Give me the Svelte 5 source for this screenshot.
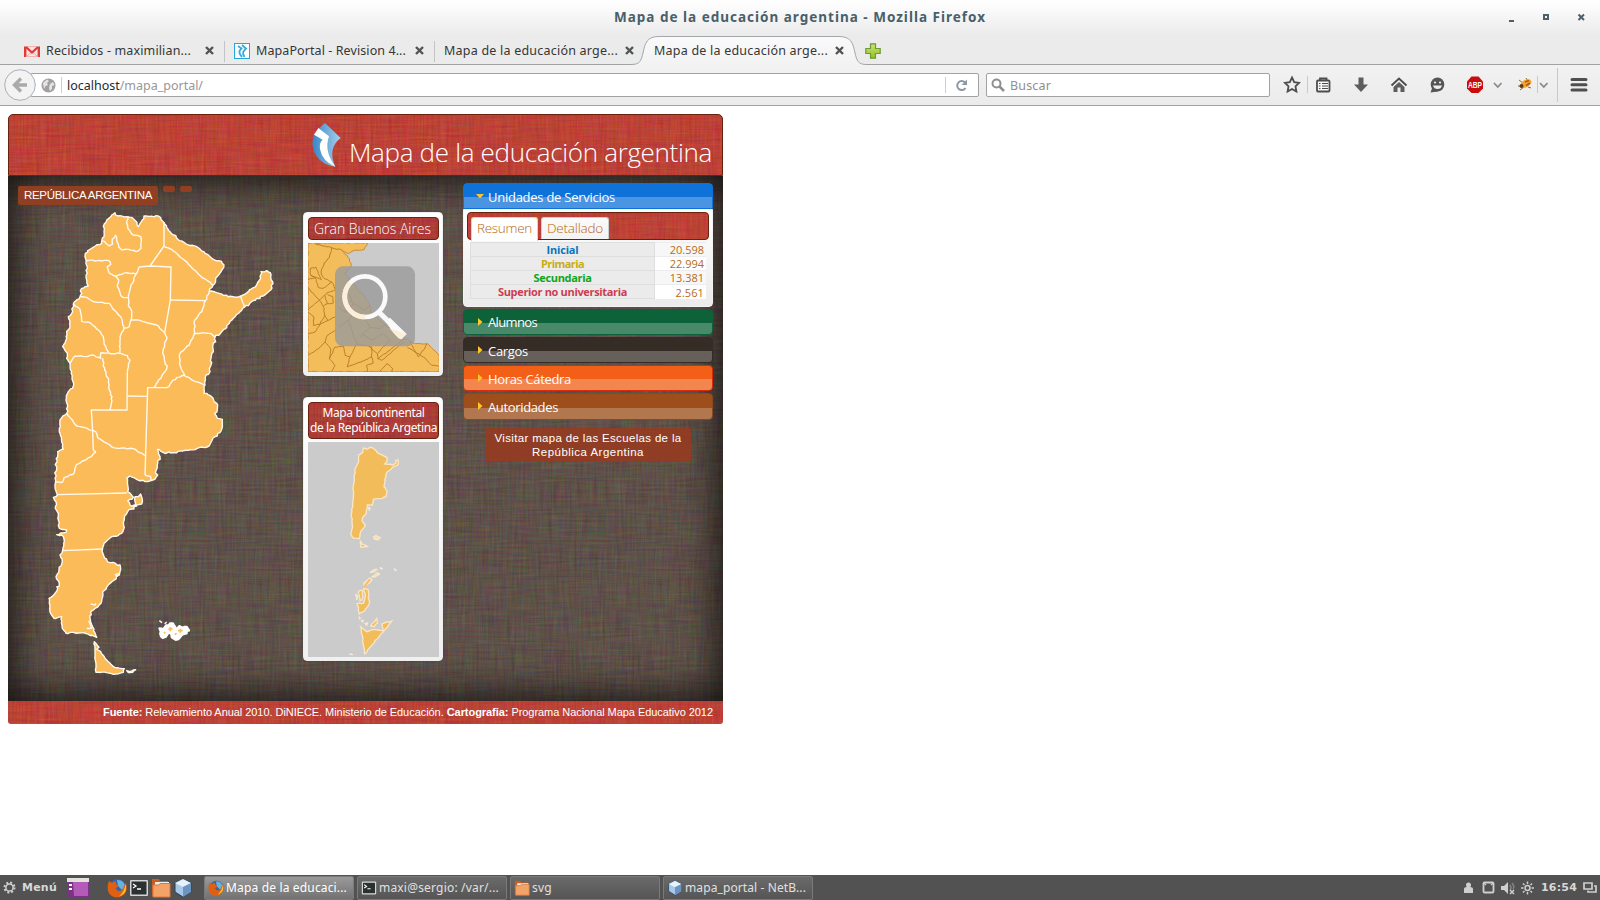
<script>
  const fit = (node, width) => {
    const natural = node.getBoundingClientRect().width;
    node.style.letterSpacing = (width - natural) / node.textContent.length + 'px';
  };

  let seed = 7;
  const rnd = () => {
    seed = (seed * 16807) % 2147483647;
    return seed / 2147483647 - 0.5;
  };
  const rough = (text, amp = 5, close = false) => {
    const p = text.trim().split(/\s+/).map((s) => s.split(',').map(Number));
    if (close) p.push(p[0]);
    let d = 'M' + p[0].join(' ');
    for (let i = 1; i < p.length; i++) {
      const [a, b] = p[i - 1];
      const [x, y] = p[i];
      const n = amp ? Math.max(1, Math.round(Math.hypot(x - a, y - b) / 7)) : 1;
      for (let k = 1; k < n; k++) {
        d += `L${(a + ((x - a) * k) / n + rnd() * amp).toFixed(1)} ${(b + ((y - b) * k) / n + rnd() * amp).toFixed(1)}`;
      }
      d += `L${x} ${y}`;
    }
    return close ? d + 'Z' : d;
  };

  const mainland =
    '255,38 265,48 290,50 305,52 316,62 325,80 332,68 342,48 385,48 400,66 410,82 425,102 450,122 475,135 500,140 525,160 550,178 575,184 581,203 568,222 557,235 549,256 538,275 560,278 580,286 610,290 632,288 655,275 680,255 692,235 693,215 710,212 721,218 722,232 728,245 722,270 700,288 680,295 643,322 615,350 575,395 555,412 557,425 548,440 550,455 543,475 540,515 528,525 525,555 522,580 545,590 563,615 562,628 554,640 562,655 577,658 576,685 555,710 545,723 537,738 500,746 430,758 400,758 382,748 390,770 383,790 376,818 383,825 375,837 345,845 320,838 300,828 290,835 293,875 310,892 293,903 300,915 320,918 293,935 283,955 283,982 275,1000 245,1010 222,1030 217,1050 222,1070 240,1088 270,1095 268,1125 240,1150 218,1175 213,1210 195,1225 182,1235 182,1265 200,1312 160,1298 108,1300 97,1285 95,1250 72,1255 60,1235 57,1195 75,1180 88,1150 78,1130 97,1085 90,1065 98,1050 103,1025 95,1005 80,1004 108,997 110,990 88,985 85,940 76,925 78,905 70,892 82,885 76,850 78,790 83,755 100,748 95,725 90,700 90,660 110,640 113,620 108,600 115,575 130,558 125,515 120,490 110,475 112,460 98,440 108,420 110,395 120,378 115,350 128,335 130,312 150,290 155,265 175,258 168,232 172,205 168,180 166,160 180,148 215,130 222,110 220,80 245,45';
  const land = [
    rough(mainland, 6, true),
    rough('315,890 325,890 332,882 337,898 335,912 318,916 315,905', 3, true),
    rough('193,1325 207,1342 200,1348 212,1355 225,1375 255,1403 283,1406 280,1417 250,1423 230,1418 198,1417', 3, true),
    rough('290,1412 300,1415 317,1409 308,1417 295,1418', 3, true)
  ];
  const borders = [
    rough('295,50 290,70 295,88 308,104 333,111 333,145 318,155 296,148 276,150 266,140 257,106 247,118 248,132 238,138 217,122', 3),
    rough('402,66 402,138', 0),
    rough('402,138 360,198', 0),
    rough('402,138 425,148 445,165 465,182 490,208 512,228 530,240 549,256', 4),
    rough('327,201 360,198 423,201 421,300 404,398', 0),
    rough('421,300 527,302', 0),
    rough('168,181 237,182 242,193 232,200 238,220 256,228 288,218 318,222 327,201', 3),
    rough('256,228 266,240 262,260 275,290 295,293 300,268 318,222', 4),
    rough('295,293 295,318 304,330 303,360 298,380 282,384', 4),
    rough('303,360 325,360 350,368 380,375 404,398', 3),
    rough('150,290 170,292 195,306 238,310 250,328 272,350 282,384 270,410 270,460', 3),
    rough('130,312 150,328 155,364 180,368 205,390 220,410 222,432 236,458', 3),
    rough('120,490 135,468 165,470 185,465 212,475 212,459 270,460 292,466 300,480 292,515', 4),
    rough('292,515 291,630 184,630 188,695 190,750 198,757', 0),
    rough('218,475 224,510 236,540 238,570 246,590 240,630', 4),
    rough('404,398 411,412 398,458 411,505 371,562', 4),
    rough('291,588 352,589', 0),
    rough('345,825 353,563 411,563', 0),
    rough('411,563 440,532 463,525', 4),
    rough('538,275 522,310 516,335 494,360 494,400 478,435 449,462 450,495 463,525 490,542 525,555', 4),
    rough('494,400 520,398 545,402 555,412', 3),
    rough('632,288 643,322', 3),
    rough('110,640 140,678 165,683 198,696 205,715 240,735 250,743 310,746 348,768', 3),
    rough('198,757 170,778 138,795 132,820 102,833 98,846 78,847', 4),
    rough('82,884 290,879', 0),
    rough('97,1052 217,1047', 0),
    rough('345,825 362,830 362,842', 2),
    rough('182,1212 195,1215 198,1210', 3),
    rough('170,1285 185,1284 176,1262', 3),
    rough('270,1120 256,1124 264,1129', 2)
  ];
  const falk = rough('388,1285 400,1293 408,1276 420,1270 432,1275 438,1288 448,1278 470,1280 477,1292 462,1302 445,1318 425,1312 430,1298 415,1298 398,1314 390,1300', 10, true);

  const gba = rough('54,128 232,128 222,148 192,150 175,160 155,149 178,175 184,196 165,218 180,240 225,290 240,315 245,340 280,370 330,405 376,430 412,430 447,465 447,514 54,514', 3, true);
  const gbaLines = [
    '75,130 125,142 155,149', '125,142 118,172 103,187 93,215 100,232 125,245 137,268',
    '60,205 78,200 88,225 94,238 62,225 60,205', '54,238 75,232 85,262 100,264 125,245',
    '54,262 88,300 110,278 137,268', '75,232 62,225', '88,300 57,325 54,330', '88,300 100,318 112,310 105,285',
    '112,310 130,308 128,288 112,282', '100,318 104,345 115,360', '54,336 72,350 70,375 90,372 104,345',
    '54,400 75,395 90,372 115,360 135,350', '54,465 85,445 105,425 112,405 135,390',
    '105,425 122,445 118,475 135,495 125,513', '118,475 135,440 160,438 165,465 180,470 172,500 245,470 250,488 230,495 232,513',
    '145,380 175,360 200,430 245,440 245,470', '200,430 180,470', '175,360 190,340 220,350 240,380 210,410',
    '240,380 270,385 290,370', '215,400 245,420 280,400 300,420 262,460 265,475 345,415', '262,475 275,480 342,425',
    '352,440 400,470 425,495 447,498', '360,425 385,470 412,430', '270,513 290,490 308,505 305,513',
    '240,440 262,460', '150,300 175,280 190,310 165,335 145,320', '190,310 225,330 240,315', '165,335 190,340'
  ].map((s) => rough(s, 3));

  const bi = [
    '220,174 232,178 240,172 250,174 262,188 292,205 290,215 284,222 308,225 318,219 317,212 324,209 325,222 305,235 288,252 282,290 292,305 288,320 270,326 250,328 247,345 232,345 228,372 218,382 216,392 226,405 212,425 208,446 190,444 182,432 188,410 184,372 190,325 190,288 196,235 206,215 206,195 218,187',
    '212,452 215,462 235,470 212,471',
    '212,710 232,725 252,718 280,722 276,702 305,693 225,792',
    '242,708 260,686 263,698 252,710',
    '222,595 235,600 238,640 224,663 208,672 202,640 220,640 226,620',
    '205,605 216,600 218,625 210,632'
  ].map((s) => rough(s, 3, true));
  const ice = ['250,440 258,436 272,442 265,450 252,447', '234,352 241,354 238,362', '240,548 250,540 262,538 256,544', '270,532 278,536 272,537', '312,536 320,540 316,543', '222,590 222,578 238,563 247,568 240,578 228,588', '245,560 262,548 270,552 255,562', '197,612 204,618 200,630', '207,680 212,684 209,688', '214,690 222,692 216,697', '224,700 234,698 230,708', '178,792 187,792 187,795'].map((s) => rough(s, 3, true));

  const sections = [
    ['Alumnos', 'green', 49], ['Cargos', 'dark', 40], ['Horas Cátedra', 'orange', 83], ['Autoridades', 'brown', 70]
  ];
  const rows = [
    ['Inicial', '20.598', '#0a73bd', 32], ['Primaria', '22.994', '#c9ad13', 43],
    ['Secundaria', '13.381', '#0ea51a', 58], ['Superior no universitaria', '2.561', '#cd3d52', 129]
  ];
  const tabs = [
    ['gmail', 'Recibidos - maximilian...', 145], ['svn', 'MapaPortal - Revision 4...', 150],
    ['', 'Mapa de la educación arge...', 174], ['', 'Mapa de la educación arge...', 174]
  ];
  const tasks = [
    ['fox', 'Mapa de la educaci...', 121], ['term', 'maxi@sergio: /var/...', 120],
    ['folder', 'svg', 20], ['cube', 'mapa_portal - NetB...', 121]
  ];
</script>

{#snippet appIcon(kind, size)}
  <svg width={size} height={size} viewBox="0 0 20 20">
    {#if kind === 'fox'}
      <circle cx="10.5" cy="9.500" r="8.5" fill="#2f66ad" />
      <path d="M10 2C15 1.500 18 5 18 9L15 12L11 8Z" fill="#66b2e2" />
      <path d="M2 3L5 5Q7 3 9 3Q8 5 10 7L12 8L9 10Q9 13 13 13Q16 12 17 8L19 5Q22 16 13 19Q4 21 1 13Q0 7 2 3Z" fill="#e05f10" />
      <path d="M18.500 6Q21 15 12 18.500Q18 13 18.500 6Z" fill="#fbc52c" />
    {:else if kind === 'term'}
      <rect x="1" y="2" width="18" height="16" rx="1" fill="#d5d5d5" />
      <rect x="2.5" y="3.5" width="15" height="13" fill="#2b3031" />
      <path d="M4 6L7 8L4 10M8 11H12" stroke="#fff" stroke-width="1.3" fill="none" />
    {:else if kind === 'folder'}
      <path d="M1 1H8L9 3H17V18H1Z" fill="#c65f23" />
      <path d="M4 4H18V10H4Z" fill="#eee" />
      <path d="M2 19V7H8L9 5.500H19V19Z" fill="#f3a268" stroke="#dc7738" />
    {:else}
      <path d="M10 1L18 5V14L10 19L2 14V5Z" fill="#a9c8e8" stroke="#26415f" />
      <path d="M2 5L10 9L18 5L10 1Z" fill="#e6f1fb" />
      <path d="M10 9L18 5V14L10 19Z" fill="#6b94c0" />
    {/if}
  </svg>
{/snippet}

<div class="screen">
  <header class="chrome">
    <div class="titlebar">
      <span></span>
      <b><span use:fit={372}>Mapa de la educación argentina - Mozilla Firefox</span></b>
      <svg class="winbtns" width="80" height="14" viewBox="0 0 80 14">
        <path d="M2 12H7" stroke="#4b6069" stroke-width="2" />
        <rect x="37" y="6" width="4" height="4" fill="none" stroke="#4b6069" stroke-width="2" />
        <path d="M71.500 5.500L77 11M77 5.500L71.500 11" stroke="#4b6069" stroke-width="2" />
      </svg>
    </div>
    <div class="tabstrip">
      {#each tabs as [icon, label, w], i}
        <div class="tab" class:active={i === 3} class:line={i < 2}>
          {#if i === 3}
            <svg class="shape" width="236" height="30" viewBox="0 0 236 30">
              <defs><linearGradient id="tg" x2="0" y2="1"><stop stop-color="#fafafa" /><stop offset="1" stop-color="#f2f2f2" /></linearGradient></defs>
              <path d="M0 28.5C9 28.5 10 25 12 17C14 7 16 .5 28 .5H208C220 .5 222 7 224 17C226 25 227 28.5 236 28.5V30H0Z" fill="url(#tg)" />
              <path d="M0 28.5C9 28.5 10 25 12 17C14 7 16 .5 28 .5H208C220 .5 222 7 224 17C226 25 227 28.5 236 28.5" fill="none" stroke="#a3a7ab" />
            </svg>
          {/if}
          {#if icon === 'gmail'}
            <svg class="fav" width="16" height="16" viewBox="0 0 16 16"><rect y="3" width="16" height="11" rx="1" fill="#f9e4e2" /><path d="M3 13L7 9.500M13 13L9 9.500" stroke="#eba29e" /><path d="M1.200 14V3.500M14.800 14V3.500" stroke="#dc3b37" stroke-width="2.400" /><path d="M2 4L8 9.500L14 4" fill="none" stroke="#dc3b37" stroke-width="2.200" /><path d="M3 3.500H13M2.500 13.500H13.500" stroke="#eeb4b1" /></svg>
          {:else if icon === 'svn'}
            <svg class="fav" width="16" height="16" viewBox="0 0 16 16"><rect x=".5" y=".5" width="15" height="15" fill="#fff" stroke="#25a8e0" /><path d="M4 3L7.500 5.500L5.500 8Q5 11 8 14M8 2L12 5.500Q9 8 9 11L10.500 14" fill="none" stroke="#38a8dc" stroke-width="1.800" /></svg>
          {/if}
          <span class="tablabel"><span use:fit={w}>{label}</span></span>
          <svg class="close" width="9" height="9" viewBox="0 0 9 9"><path d="M1 1L8 8M8 1L1 8" stroke="#505553" stroke-width="2.4" /></svg>
        </div>
      {/each}
      <svg class="plus" width="16" height="16" viewBox="0 0 16 16"><defs><linearGradient id="pg" x2="0" y2="1"><stop stop-color="#cfe27a" /><stop offset="1" stop-color="#92bf20" /></linearGradient></defs><path d="M5.5 .8H10.5V5.5H15.2V10.5H10.5V15.2H5.5V10.5H.8V5.5H5.5Z" fill="url(#pg)" stroke="#6b9b31" stroke-width="1.2" /></svg>
    </div>
    <nav class="toolbar">
      <svg class="back" width="32" height="32" viewBox="0 0 32 32"><circle cx="16" cy="16" r="15.3" fill="#f3f3f3" stroke="#a9b0b8" /><path d="M23 16H12M17 9.500L10.500 16L17 22.500" stroke="#aaa" stroke-width="3.4" fill="none" /></svg>
      <div class="url">
        <svg width="15" height="15" viewBox="0 0 15 15"><circle cx="7.500" cy="7.500" r="7" fill="#a0a0a0" /><path d="M2 5L6 1.500L8 3L6 5L7 7L4.500 8L3 11ZM9 6L12 4L13.500 7L11 8L11 11L9 13L8 10Z" fill="#e5e5e5" /></svg>
        <i></i>
        <span use:fit={136}>localhost<em>/mapa_portal/</em></span>
        <i class="rsep"></i>
        <svg class="reload" width="13" height="13" viewBox="0 0 13 13"><path d="M10 3.500A4.500 4.500 0 1 0 10.500 9" fill="none" stroke="#8d99a7" stroke-width="2" /><path d="M12 .5V6H6.500Z" fill="#8d99a7" /></svg>
      </div>
      <div class="search">
        <svg width="14" height="14" viewBox="0 0 14 14"><circle cx="5.500" cy="5.500" r="4" fill="none" stroke="#8f8f8f" stroke-width="2" /><path d="M8.500 8.500L13 13" stroke="#8f8f8f" stroke-width="2.500" /></svg>
        <span use:fit={41}>Buscar</span>
      </div>
      <svg class="tools" width="320" height="40" viewBox="1280 65 320 40">
        <g fill="none" stroke="#4d4d4d" stroke-width="1.800">
          <path d="M1292 77.500L1294.200 82.200L1299 82.800L1295.500 86.300L1296.400 91.500L1292 89L1287.600 91.500L1288.500 86.300L1285 82.800L1289.800 82.200Z" />
          <rect x="1317" y="80.500" width="12.500" height="11" rx="1" fill="#f6f6f6" />
          <path d="M1320 80V78.500H1326.500V80" />
          <path d="M1319 83.500H1320.500M1322 83.500H1328M1319 86H1320.500M1322 86H1328M1319 88.500H1320.500M1322 88.500H1328" stroke-width="1.100" />
          <path d="M1391.500 85.500L1399 78.500L1406.500 85.500" stroke-width="2" />
        </g>
        <path d="M1358.500 77.500H1363.500V84.500H1368L1361 92L1354 84.500H1358.500Z" fill="#5d5d5d" />
        <path d="M1393.500 87L1399 82L1404.500 87V92H1400.500V87.500H1397.500V92H1393.500Z" fill="#5d5d5d" />
        <ellipse cx="1437.500" cy="84.500" rx="6.800" ry="7" fill="#555" /><path d="M1430.500 92.500L1432.500 87L1438 91.500Z" fill="#555" />
        <circle cx="1435" cy="82.500" r="1.100" fill="#eee" /><circle cx="1440" cy="82.500" r="1.100" fill="#eee" />
        <path d="M1433 85.500H1442Q1441 89 1437.500 89T1433 85.500Z" fill="#eee" />
        <path d="M1471.500 76.500H1478.500L1483 81.500V88.500L1478.500 93H1471.500L1467 88.500V81.500Z" fill="#c90c0c" />
        <text x="1475" y="88" text-anchor="middle" textLength="14" lengthAdjust="spacingAndGlyphs" font-family="Liberation Sans" font-weight="bold" font-size="8.500" fill="#fff">ABP</text>
        <path d="M1494 83L1497.800 87L1501.500 83M1540 83L1543.800 87L1547.500 83" fill="none" stroke="#8b8b8b" stroke-width="1.800" />
        <path d="M1519 80L1523 83M1520 90L1524 87M1526 78L1528 81M1528 87L1531 88M1518 86L1522 86" stroke="#8f6b33" />
        <ellipse cx="1526" cy="83.500" rx="5.800" ry="3.600" transform="rotate(-28 1526 83.500)" fill="#f2a52e" />
        <path d="M1525 82L1529 80.500M1526 85.500L1530 83" stroke="#b5541c" stroke-width="1.500" /><circle cx="1521.500" cy="86" r="2" fill="#5a3a14" />
        <path d="M1307.500 76V93M1537.500 76V93M1557.500 68V102" stroke="#c9c9c9" />
        <path d="M1572 79.500H1586M1572 84.700H1586M1572 90H1586" stroke="#4f4f4f" stroke-width="3" stroke-linecap="round" />
      </svg>
    </nav>
  </header>

  <main>
    <section class="portal">
      <div class="banner linen-red">
        <svg width="30" height="46" viewBox="0 0 90 138">
          <defs><linearGradient id="lg"><stop stop-color="#3686c7" /><stop offset="1" stop-color="#a5d0ed" /></linearGradient></defs>
          <path d="M42 3L89 48Q48 80 73 134Q15 126 5 72Q0 35 42 3Z" fill="url(#lg)" />
          <path d="M22 18L54 43Q38 88 73 134Q34 118 27 82Q24 62 35 53L9 38Z" fill="#fff" />
        </svg>
        <h1><span use:fit={363}>Mapa de la educación argentina</span></h1>
      </div>

      <div class="stage">
        <div class="mapcol">
          <div class="crumbs"><span class="crumb"><span use:fit={128}>REPÚBLICA ARGENTINA</span></span><i></i><i></i></div>
          <svg class="argentina" width="260" height="490" viewBox="0 0 780 1470">
            <g fill="#fabb58" stroke="#fff9ee" stroke-width="4.200" stroke-linejoin="round">
              {#each land as d}<path {d} />{/each}
              <g fill="none">{#each borders as d}<path {d} />{/each}</g>
              <path d={falk} stroke-width="6" stroke="#fff" fill="#fff" />
              <path d="M415 1287H428M421 1281V1294M444 1292H458M451 1286V1298M434 1304L440 1300M402 1300L406 1296" stroke="#fabb58" stroke-width="5" fill="none" />
              <path d="M388 1262L396 1268M404 1272L410 1266" />
            </g>
          </svg>
        </div>

        <div class="cards">
          <div class="card">
            <h2 class="linen-red"><span use:fit={117}>Gran Buenos Aires</span></h2>
            <svg width="131" height="129" viewBox="54 128 393 387">
              <rect x="54" y="128" width="393" height="387" fill="#cbcbcb" />
              <path d={gba} fill="#f4bd5c" stroke="#c68b38" stroke-width="3" />
              {#each gbaLines as d}<path {d} fill="none" stroke="#bd7e2a" stroke-width="3" />{/each}
              <rect x="135" y="198" width="240" height="240" rx="24" fill="#9b9b9b" fill-opacity=".82" />
              <circle cx="225" cy="289" r="61" fill="none" stroke="#fafafa" stroke-width="14" />
              <path d="M179 249A61 61 0 0 0 225 350" fill="none" stroke="#fceed8" stroke-width="14" />
              <path d="M268 337L295 363" stroke="#f8f8f8" stroke-width="15" />
              <path d="M285 363L300 352L350 401L334 417Q324 415 316 403Z" fill="#fafafa" />
              <path d="M298 383L350 401L334 417Q324 415 298 383Z" fill="#fceed8" />
            </svg>
          </div>
          <div class="card">
            <h2 class="linen-red two"><span use:fit={102}>Mapa bicontinental</span><span use:fit={127}>de la República Argetina</span></h2>
            <svg width="131" height="215" viewBox="54 156 393 645">
              <rect x="54" y="156" width="393" height="645" fill="#cbcbcb" />
              {#each bi as d}<path {d} fill="#f3bc5b" stroke="#fbe6c3" stroke-width="4" />{/each}
              {#each ice as d}<path {d} fill="#f9deb0" stroke="#fbeed8" stroke-width="2.500" />{/each}
              <path d="M222 592L240 568" stroke="#f3bc5b" stroke-width="5" />
            </svg>
          </div>
        </div>

        <aside>
          <div class="acc blue"><svg width="8" height="5" viewBox="0 0 8 5"><path d="M0 0H8L4 4.500Z" fill="#fbc72b" /></svg><span use:fit={127}>Unidades de Servicios</span></div>
          <div class="panel">
            <div class="ptabs linen-red">
              <span class="sel"><span use:fit={55}>Resumen</span></span>
              <span><span use:fit={56}>Detallado</span></span>
            </div>
            <table>
              <tbody>
                {#each rows as [name, value, color, w]}
                  <tr><th style:color={color}><span use:fit={w}>{name}</span></th><td><span use:fit={value.length * 5.7}>{value}</span></td></tr>
                {/each}
              </tbody>
            </table>
          </div>
          {#each sections as [name, cls, w]}
            <div class="acc {cls}"><svg width="5" height="8" viewBox="0 0 5 8"><path d="M0 0V8L4.500 4Z" fill="#fbc72b" /></svg><span use:fit={w}>{name}</span></div>
          {/each}
          <div class="visit"><span use:fit={187}>Visitar mapa de las Escuelas de la</span><br /><span use:fit={112}>República Argentina</span></div>
        </aside>
      </div>

      <footer class="linen-red"><span use:fit={610}><b>Fuente:</b> Relevamiento Anual 2010. DiNIECE. Ministerio de Educación. <b>Cartografia:</b> Programa Nacional Mapa Educativo 2012</span></footer>
    </section>
  </main>

  <div class="taskbar">
    <svg class="gear" width="13" height="13" viewBox="0 0 13 13"><circle cx="6.500" cy="6.500" r="5" fill="none" stroke="#d0d0d0" stroke-width="2" stroke-dasharray="2 1.930" /><circle cx="6.500" cy="6.500" r="3.600" fill="none" stroke="#d0d0d0" stroke-width="1.500" /></svg>
    <b class="menu"><span use:fit={35}>Menú</span></b>
    <svg class="desk" width="22" height="19" viewBox="0 0 22 19"><rect y="3" width="22" height="16" fill="#7b3388" /><path d="M0 0H22V4H0Z" fill="#e4e2da" /><path d="M2 6H5V8H2ZM2 10H5V12H2Z" fill="#fff" /><path d="M6 4H21V18H7Z" fill="#b45bba" /></svg>
    <div class="launch">{@render appIcon('fox', 20)}{@render appIcon('term', 20)}{@render appIcon('folder', 20)}{@render appIcon('cube', 20)}</div>
    <div class="tasks">
      {#each tasks as [icon, label, w], i}
        <div class="task" class:current={i === 0}>{@render appIcon(icon, 16)}<span use:fit={w}>{label}</span></div>
      {/each}
    </div>
    <svg class="tray" width="74" height="16" viewBox="1462 880 74 16">
      <g fill="#cfcfcf"><circle cx="1468.500" cy="885" r="2.500" /><path d="M1464 893V889Q1464 887 1467 887H1470Q1473 887 1473 889V893Z" />
      <path d="M1501 886H1504L1508 882V894L1504 890H1501Z" /></g>
      <g fill="none" stroke="#cfcfcf" stroke-width="1.500"><rect x="1483.500" y="882.500" width="10" height="10" rx="1" stroke-width="1.800" /><path d="M1484 883L1486 885M1493 883L1491 885" stroke-width="1.200" /><path d="M1510 885Q1512 888 1510 890M1512 883Q1515 887 1513 889" stroke="#858585" /><path d="M1510 890L1514 894M1514 890L1510 894" /><circle cx="1527.500" cy="888" r="2.500" /><path d="M1527.500 881.500V884M1527.500 892V894.500M1521 888H1523.500M1531.500 888H1534M1523 883.500L1524.500 885M1532 883.500L1530.500 885M1523 892.500L1524.500 891M1532 892.500L1530.500 891" /></g>
    </svg>
    <b class="clock"><span use:fit={36}>16:54</span></b>
    <svg class="screens" width="14" height="12" viewBox="0 0 14 12"><path d="M1 1H9V7H1ZM11 4H13V10H5V8.500" fill="none" stroke="#cfcfcf" stroke-width="1.700" /></svg>
  </div>
</div>

<style>
  :global(body) { margin: 0; background: #fff; overflow: hidden; }
  * { box-sizing: border-box; }
  svg { display: block; flex: none; }
  .screen {
    --linen: url("data:image/svg+xml,%3Csvg xmlns='http://www.w3.org/2000/svg' width='400' height='400'%3E%3Cfilter id='a' x='0' y='0' width='100%25' height='100%25' color-interpolation-filters='sRGB'%3E%3CfeTurbulence type='fractalNoise' baseFrequency='.03 .45' numOctaves='3' stitchTiles='stitch'/%3E%3CfeColorMatrix values='.9 0 0 0 .05 0 .9 0 0 .05 0 0 .9 0 .05 0 0 0 0 .16'/%3E%3C/filter%3E%3Cfilter id='b' x='0' y='0' width='100%25' height='100%25' color-interpolation-filters='sRGB'%3E%3CfeTurbulence type='fractalNoise' baseFrequency='.45 .03' numOctaves='3' seed='4' stitchTiles='stitch'/%3E%3CfeColorMatrix values='.9 0 0 0 .05 0 .9 0 0 .05 0 0 .9 0 .05 0 0 0 0 .14'/%3E%3C/filter%3E%3Crect width='400' height='400' filter='url(%23a)'/%3E%3Crect width='400' height='400' filter='url(%23b)'/%3E%3C/svg%3E");
    width: 1600px; height: 900px; display: flex; flex-direction: column; font-family: "Noto Sans", sans-serif; font-size: 12.5px; white-space: nowrap;
  }
  .chrome { height: 106px; background: linear-gradient(#fff 0, #ebebeb 36px, #ebebeb); border-bottom: 1px solid #a2a2a2; }
  .titlebar { height: 36px; display: grid; grid-template-columns: 94px 1fr 94px; justify-items: center; color: #48606a; padding-top: 8px; }
  .titlebar b { font: bold 13.5px/18px "Noto Sans", sans-serif; }
  .winbtns { margin: 1px 12px 0 0; }
  .tabstrip { height: 29px; padding-left: 14px; display: flex; align-items: center; border-bottom: 1px solid #a2a2a2; color: #363636; }
  .tab { width: 210px; height: 29px; display: flex; align-items: center; padding: 0 10px 0 10px; position: relative; }
  .tab.line::after { content: ''; position: absolute; right: -1px; top: 5px; width: 1px; height: 21px; background: #c4c4c4; }
  .fav { margin-right: 6px; margin-top: 2px; }
  .tablabel { flex: 1; z-index: 1; }
  .close { z-index: 1; margin-top: 1px; }
  .tab.active .shape { position: absolute; left: -13px; top: 0; }
  .plus { margin-left: 11px; margin-top: 2px; }
  .toolbar { height: 40px; display: flex; align-items: center; background: linear-gradient(#f2f2f2, #ebebeb); padding-left: 4px; }
  .back { position: relative; z-index: 2; }
  .url, .search { height: 24px; background: #fff; border: 1px solid #a2a2a2; border-radius: 2px; display: flex; align-items: center; color: #242a2d; }
  .url { width: 949px; margin-left: -6px; padding: 0 10px 0 10px; }
  .url i { width: 1px; height: 16px; background: #ccc; margin: 0 5px; }
  .url .rsep { margin-left: auto; margin-right: 9px; }
  .url em { font-style: normal; color: #979797; }
  .search { width: 284px; margin-left: 7px; padding-left: 4px; color: #8f8f8f; }
  .search svg { margin-right: 5px; }
  .tools { margin-left: 10px; }

  main { height: 769px; padding: 8px; }
  .portal { width: 715px; }
  .linen-red { background-color: #d2291a; background-image: var(--linen); }
  .banner { height: 62px; border: 1px solid #6a210e; border-radius: 5px 5px 0 0; display: flex; justify-content: flex-end; padding: 7px 10px 0 0; }
  .banner h1 { margin: 8px 0 0 8px; font: 300 26px/44px "Open Sans", sans-serif; color: #fff; width: 363px; }
  .stage {
    height: 525px; display: flex; background-color: #503f33; background-image: var(--linen);
    box-shadow: inset 0 0 40px 3px rgba(0, 0, 0, .85);
  }
  .mapcol { width: 295px; padding: 10px 0 0 10px; }
  .crumbs { display: flex; gap: 5px; height: 14px; }
  .crumb { width: 140px; height: 19px; background: #913f22; border-radius: 2px; padding-left: 6px; color: #fff; font: 11.5px/18px "Liberation Sans", sans-serif; }
  .crumbs i { width: 12px; height: 6px; border-radius: 2px; background: #913f22; }
  .argentina { margin-left: 12px; }
  .cards { width: 140px; padding-top: 36px; }
  .card { width: 140px; background: linear-gradient(#fff, #f0f0f0); border: 1px solid #eee; border-radius: 4px; padding: 4px; height: 164px; margin-bottom: 21px; box-shadow: 0 0 2px #443; }
  .card + .card { height: 264px; }
  .card h2 { margin: 0 0 3px; height: 23px; border: 1px solid #6a210e; border-radius: 4px; color: #fff; text-align: center; font: 300 14px/22px "Open Sans", sans-serif; width: 131px; background-color: #bd221c; }
  .card h2:not(.two) span { margin-left: -2px; }
  .card h2.two { height: 37px; font: 12px/15px "Noto Sans", sans-serif; padding-top: 2px; display: flex; flex-direction: column; align-items: center; }
  aside { width: 250px; margin-left: 20px; padding-top: 7px; }
  .acc { height: 26px; margin-bottom: 2px; border: 1px solid; border-radius: 4px; color: #fff; display: flex; align-items: center; font: 500 13px/24px "Open Sans", sans-serif; padding: 2px 0 0 14px; }
  .acc svg { margin-right: 5px; margin-top: -2px; }
  .blue { margin-bottom: 0; background: linear-gradient(#0e72d8 54%, #4a94e1 54%); border-color: #0e72d8; border-radius: 4px 4px 0 0; padding-left: 12px; }
  .blue svg { margin-right: 4px; }
  .green { padding-top: 0; background: linear-gradient(#0e6239 54%, #48896a 54%); border-color: #0e6239; }
  .green svg { margin-top: 0; }
  .dark { background: linear-gradient(#352d25 54%, #67605a 54%); border-color: #352d25; }
  .orange { background: linear-gradient(#f35f17 54%, #f3864f 54%); border-color: #d62c09; }
  .brown { height: 27px; padding-top: 0; background: linear-gradient(#9d4e1a 54%, #b3774f 54%); border-color: #87491d; }
  .panel { height: 98px; margin-bottom: 2px; background: linear-gradient(#fff, #ebebeb); border: 1px solid #f3f3f3; border-radius: 0 0 4px 4px; padding: 2px 3px; }
  .ptabs { width: 242px; height: 28px; border: 1px solid #6a210e; border-radius: 4px; display: flex; padding: 4px 0 0 3px; gap: 3px; font: 300 13.5px/21px "Open Sans", sans-serif; color: #b8660f; }
  .ptabs > span { width: 68px; height: 22px; background: linear-gradient(#fafafa, #f3f3f3); border: 1px solid #ccc; border-bottom: 0; border-radius: 3px 3px 0 0; padding-left: 5px; }
  .ptabs > .sel { width: 67px; height: 24px; background: #fff; border-color: #fbd850; }
  table { margin: 2px 0 0 3px; width: 236px; border-spacing: 0; font: 11px/13px "Open Sans", sans-serif; }
  th { width: 185px; height: 14px; background: #ebebeb; border: 1px solid #dedede; border-bottom: 0; padding: 0; font-weight: 700; }
  td { height: 14px; padding: 0 2px 0 0; background: #fff; border-top: 1px solid #ececec; color: #b96a18; text-align: right; font-weight: 500; }
  tr:last-child th { border-bottom: 1px solid #dedede; }
  tr:nth-child(odd) td { background: #f7f7f7; }
  .visit { width: 206px; height: 34px; margin: 8px 0 0 22px; background: rgba(153, 58, 32, .86); border-radius: 2px; color: #fff; text-align: center; font: 11.5px/14px "Liberation Sans", sans-serif; padding-top: 3px; }
  footer { height: 23px; border-radius: 0 0 3px 3px; color: #fff; font: 11px/22px "Liberation Sans", sans-serif; display: flex; justify-content: flex-end; padding-right: 10px; }

  .taskbar { height: 25px; background: #525252; display: flex; align-items: center; color: #d8d8d8; padding-left: 3px; font-size: 12px; }
  .menu, .clock { font: bold 11px/24px "DejaVu Sans", sans-serif; }
  .menu { width: 35px; margin-left: 6px; }
  .desk { margin-left: 10px; }
  .launch { display: flex; gap: 2px; margin-left: 18px; }
  .tasks { display: flex; gap: 3px; margin-left: 11px; flex: 1; }
  .task { width: 150px; height: 24px; border: 1px solid #7a7a7a; border-radius: 2px; background: linear-gradient(#6a6a6a, #555); display: flex; align-items: center; gap: 2px; padding-left: 3px; color: #e0e0e0; }
  .task.current { background: linear-gradient(#9a9a9a, #727272); color: #fff; }
  .clock { width: 36px; margin-left: 5px; }
  .screens { margin: 0 3px 0 6px; }
</style>
